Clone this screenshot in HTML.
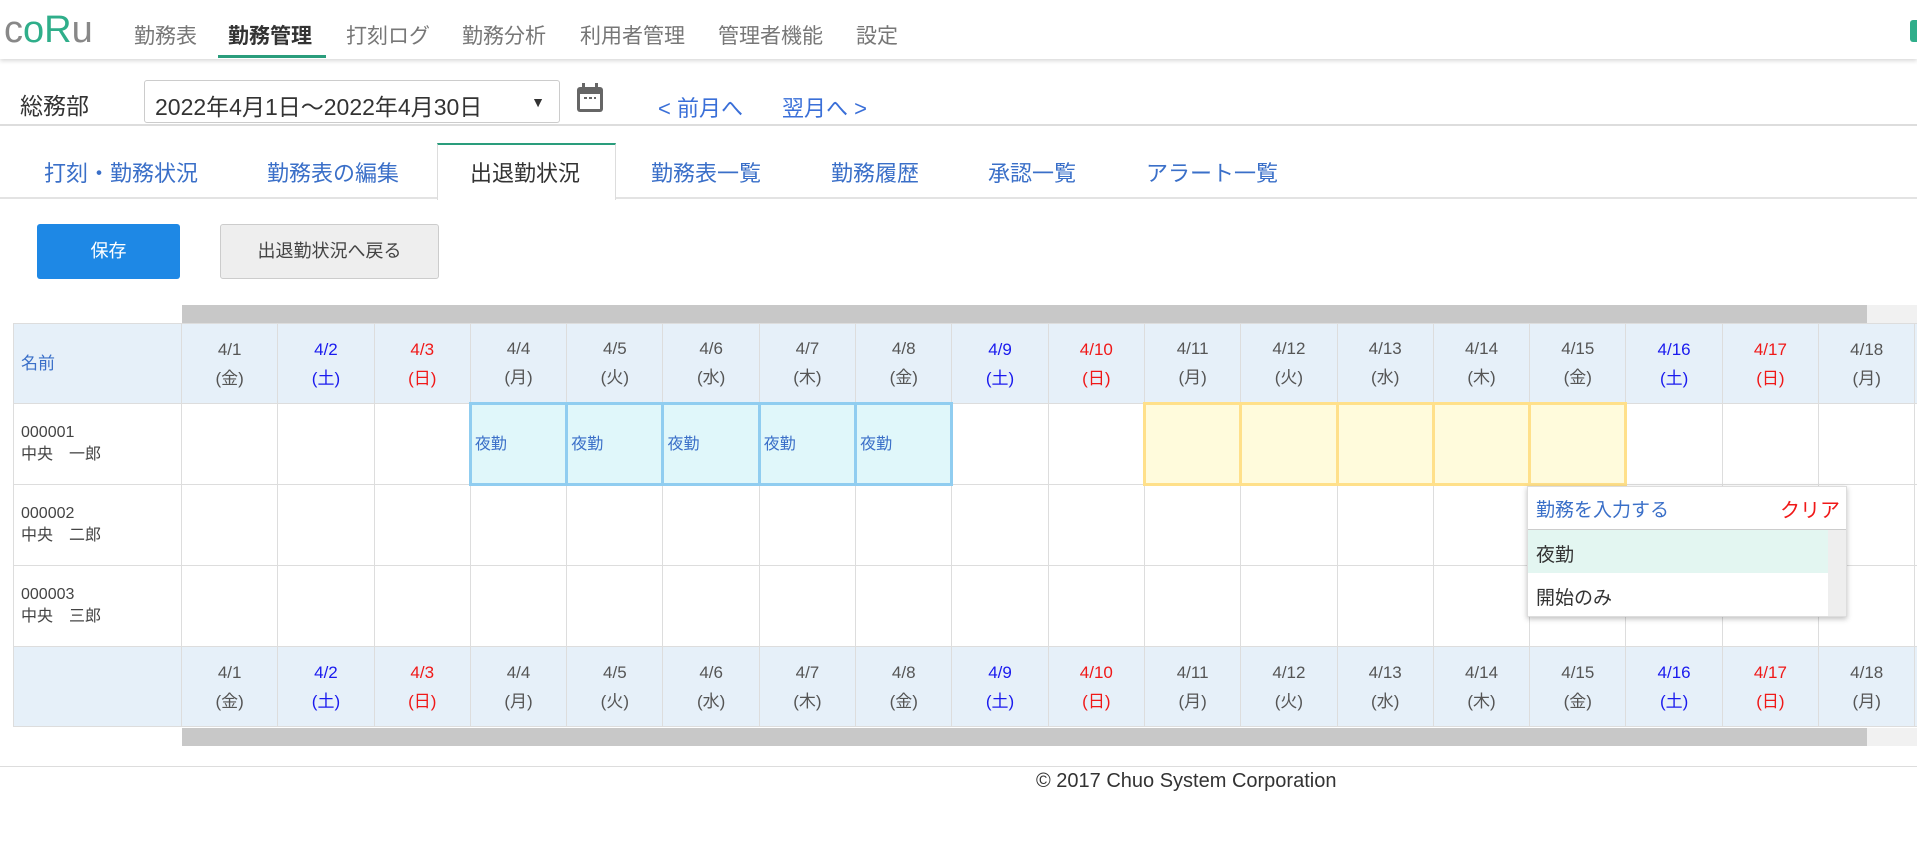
<!DOCTYPE html>
<html><head><meta charset="utf-8"><style>
*{margin:0;padding:0;box-sizing:border-box}
body{width:1917px;height:853px;overflow:hidden;background:#fff;font-family:"Liberation Sans","Noto Sans CJK JP",sans-serif;position:relative;color:#444}
.a{position:absolute;white-space:nowrap}
.hdr{position:absolute;left:0;top:0;width:1917px;height:59px;background:#fff;box-shadow:0 2px 4px rgba(0,0,0,.15);z-index:2}
.nav{font-size:21px;color:#777;top:20px}
.tab{font-size:22px;color:#3a6fc8;top:156px}
table{border-collapse:collapse;table-layout:fixed;position:absolute;left:13px;top:323px}
td{border:1px solid #ddd;text-align:center;font-size:17px;color:#555;line-height:29px;vertical-align:middle}
tr.h td{background:#e6f0f9;height:80px;padding-top:0}
tr.d td{height:81px;text-align:left}
.s{color:#1a1aee}.u{color:#f01818}
td.b{background:#e0f7fa;border:3px solid #90cdf0;font-size:16px;color:#3a6fc8;padding-left:3px}
td.y{background:#fffbdc;border:3px solid #ffe08a}
td.n{text-align:left;padding-left:7px;font-size:16px;line-height:22px;color:#444}
</style></head><body>
<div class="hdr">
<div class="a" style="left:4px;top:9px;font-size:38px;color:#888;letter-spacing:0px;font-family:'Liberation Sans',sans-serif">c<span style="color:#2fae8a">o</span><span style="color:#2fae8a">R</span>u</div>
<div class="a nav" style="left:134px">勤務表</div>
<div class="a nav" style="left:228px;color:#333;font-weight:bold">勤務管理</div>
<div class="a" style="left:218px;top:55px;width:108px;height:3px;background:#2a9d7c"></div>
<div class="a nav" style="left:346px">打刻ログ</div>
<div class="a nav" style="left:462px">勤務分析</div>
<div class="a nav" style="left:580px">利用者管理</div>
<div class="a nav" style="left:718px">管理者機能</div>
<div class="a nav" style="left:856px">設定</div>
<div class="a" style="left:1910px;top:20px;width:10px;height:22px;background:#2fae8a;border-radius:3px"></div>
</div>
<div class="a" style="left:20px;top:87px;font-size:23px;color:#333">総務部</div>
<div class="a" style="left:144px;top:80px;width:416px;height:43px;border:1px solid #ccc;border-radius:3px;font-size:23px;color:#333;padding:7px 0 0 10px">2022年4月1日～2022年4月30日<span style="position:absolute;right:14px;top:13px;font-size:14px">▼</span></div>
<svg class="a" style="left:575px;top:82px" width="30" height="32" viewBox="0 0 30 32"><rect x="2" y="5" width="26" height="25" rx="3" fill="#666"/><rect x="5" y="12" width="20" height="15" fill="#fff"/><rect x="7" y="1" width="3" height="7" fill="#666"/><rect x="20" y="1" width="3" height="7" fill="#666"/><rect x="9" y="15" width="3" height="2" fill="#666"/><rect x="14" y="15" width="3" height="2" fill="#666"/><rect x="19" y="15" width="2" height="2" fill="#666"/></svg>
<div class="a" style="left:658px;top:91px;font-size:22px;color:#3a6fd8">&lt; 前月へ</div>
<div class="a" style="left:782px;top:91px;font-size:22px;color:#3a6fd8">翌月へ &gt;</div>
<div class="a" style="left:0;top:124px;width:1917px;height:2px;background:#ddd"></div>
<div class="a" style="left:0;top:197px;width:1917px;height:2px;background:#e3e3e3"></div>
<div class="a" style="left:437px;top:143px;width:179px;height:57px;background:#fff;border:1px solid #ddd;border-top:2px solid #2a9d7c;border-bottom:none"></div>
<div class="a tab" style="left:44px">打刻・勤務状況</div>
<div class="a tab" style="left:267px">勤務表の編集</div>
<div class="a tab" style="left:470px;color:#333">出退勤状況</div>
<div class="a tab" style="left:651px">勤務表一覧</div>
<div class="a tab" style="left:831px">勤務履歴</div>
<div class="a tab" style="left:988px">承認一覧</div>
<div class="a tab" style="left:1146px">アラート一覧</div>
<div class="a" style="left:37px;top:224px;width:143px;height:55px;background:#1e88e5;border-radius:3px;color:#fff;font-size:18px;text-align:center;line-height:55px">保存</div>
<div class="a" style="left:220px;top:224px;width:219px;height:55px;background:#eee;border:1px solid #ccc;border-radius:3px;color:#444;font-size:18px;text-align:center;line-height:53px">出退勤状況へ戻る</div>
<div class="a" style="left:182px;top:305px;width:1735px;height:18px;background:#f1f1f1"></div>
<div class="a" style="left:182px;top:305px;width:1685px;height:18px;background:#c8c8c8"></div>
<div class="a" style="left:182px;top:728px;width:1735px;height:18px;background:#f1f1f1"></div>
<div class="a" style="left:182px;top:728px;width:1685px;height:18px;background:#c8c8c8"></div>
<div class="a" style="left:0;top:322px;width:1917px;height:408px;overflow:hidden">
<table style="left:13px;top:1px;width:1980px">
<colgroup><col style="width:168px"><col span="19" style="width:96.3px"></colgroup>
<tr class="h"><td style="text-align:left;padding-left:7px;color:#3a6fc8">名前</td><td>4/1<br>(金)</td><td class="s">4/2<br>(土)</td><td class="u">4/3<br>(日)</td><td>4/4<br>(月)</td><td>4/5<br>(火)</td><td>4/6<br>(水)</td><td>4/7<br>(木)</td><td>4/8<br>(金)</td><td class="s">4/9<br>(土)</td><td class="u">4/10<br>(日)</td><td>4/11<br>(月)</td><td>4/12<br>(火)</td><td>4/13<br>(水)</td><td>4/14<br>(木)</td><td>4/15<br>(金)</td><td class="s">4/16<br>(土)</td><td class="u">4/17<br>(日)</td><td>4/18<br>(月)</td><td>4/19<br>(火)</td></tr>
<tr class="d"><td class="n">000001<br>中央　一郎</td><td></td><td></td><td></td><td class="b">夜勤</td><td class="b">夜勤</td><td class="b">夜勤</td><td class="b">夜勤</td><td class="b">夜勤</td><td></td><td></td><td class="y"></td><td class="y"></td><td class="y"></td><td class="y"></td><td class="y"></td><td></td><td></td><td></td><td></td></tr>
<tr class="d"><td class="n">000002<br>中央　二郎</td><td></td><td></td><td></td><td></td><td></td><td></td><td></td><td></td><td></td><td></td><td></td><td></td><td></td><td></td><td></td><td></td><td></td><td></td><td></td></tr>
<tr class="d"><td class="n">000003<br>中央　三郎</td><td></td><td></td><td></td><td></td><td></td><td></td><td></td><td></td><td></td><td></td><td></td><td></td><td></td><td></td><td></td><td></td><td></td><td></td><td></td></tr>
<tr class="h"><td></td><td>4/1<br>(金)</td><td class="s">4/2<br>(土)</td><td class="u">4/3<br>(日)</td><td>4/4<br>(月)</td><td>4/5<br>(火)</td><td>4/6<br>(水)</td><td>4/7<br>(木)</td><td>4/8<br>(金)</td><td class="s">4/9<br>(土)</td><td class="u">4/10<br>(日)</td><td>4/11<br>(月)</td><td>4/12<br>(火)</td><td>4/13<br>(水)</td><td>4/14<br>(木)</td><td>4/15<br>(金)</td><td class="s">4/16<br>(土)</td><td class="u">4/17<br>(日)</td><td>4/18<br>(月)</td><td>4/19<br>(火)</td></tr>
</table></div>
<div class="a" style="left:1527px;top:486px;width:320px;height:131px;background:#fff;border:1px solid #ddd;box-shadow:0 2px 5px rgba(0,0,0,.25);z-index:3">
<div class="a" style="left:8px;top:8px;font-size:19px;color:#3a6fc8">勤務を入力する</div>
<div class="a" style="right:6px;top:7px;font-size:20px;color:#f01818">クリア</div>
<div class="a" style="left:0;top:42px;width:318px;height:1px;background:#ccc"></div>
<div class="a" style="left:0;top:43px;width:300px;height:43px;background:#e3f6f1"></div>
<div class="a" style="left:300px;top:43px;width:18px;height:86px;background:#eee"></div>
<div class="a" style="left:8px;top:53px;font-size:19px;color:#333">夜勤</div>
<div class="a" style="left:8px;top:96px;font-size:19px;color:#333">開始のみ</div>
</div>
<div class="a" style="left:0;top:766px;width:1917px;height:1px;background:#ddd"></div>
<div class="a" style="left:1036px;top:770px;font-size:20px;color:#333">© 2017 Chuo System Corporation</div>
</body></html>
